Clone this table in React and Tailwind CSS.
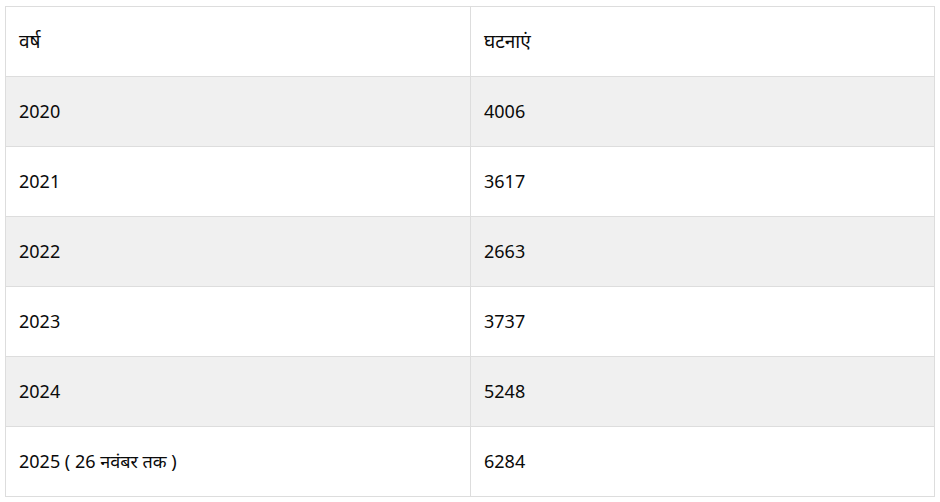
export default function App() {
  const D = ({ children }) => <span className="text-[19px]">{children}</span>;
  const rows = [
    ["2020", "4006"],
    ["2021", "3617"],
    ["2022", "2663"],
    ["2023", "3737"],
    ["2024", "5248"],
    ["2025 ( 26 नवंबर तक )", "6284"],
  ];
  return (
    <div className="w-[940px] h-[502px] bg-white pt-[6px] pl-[5px]" style={{ fontFamily: '"Noto Sans", "Noto Sans Devanagari", "Nirmala UI", sans-serif' }}>
      <div className="w-[930px] border border-b-0 border-[#dddddd] text-[18px] text-[#0a0a0a]">
        <div className="flex h-[70px] border-b border-[#dddddd]">
          <div className="w-[465px] border-r border-[#dddddd] pl-[13px] flex items-center"><D>वर्ष</D></div>
          <div className="flex-1 pl-[13px] flex items-center"><D>घटनाएं</D></div>
        </div>
        {rows.map((r, i) => (
          <div key={i} className={"flex h-[70px] border-b border-[#dddddd] " + (i % 2 === 0 ? "bg-[#f0f0f0]" : "bg-white")}>
            <div className="w-[465px] border-r border-[#dddddd] pl-[13px] flex items-center">{r[0]}</div>
            <div className="flex-1 pl-[13px] flex items-center">{r[1]}</div>
          </div>
        ))}
      </div>
    </div>
  );
}
